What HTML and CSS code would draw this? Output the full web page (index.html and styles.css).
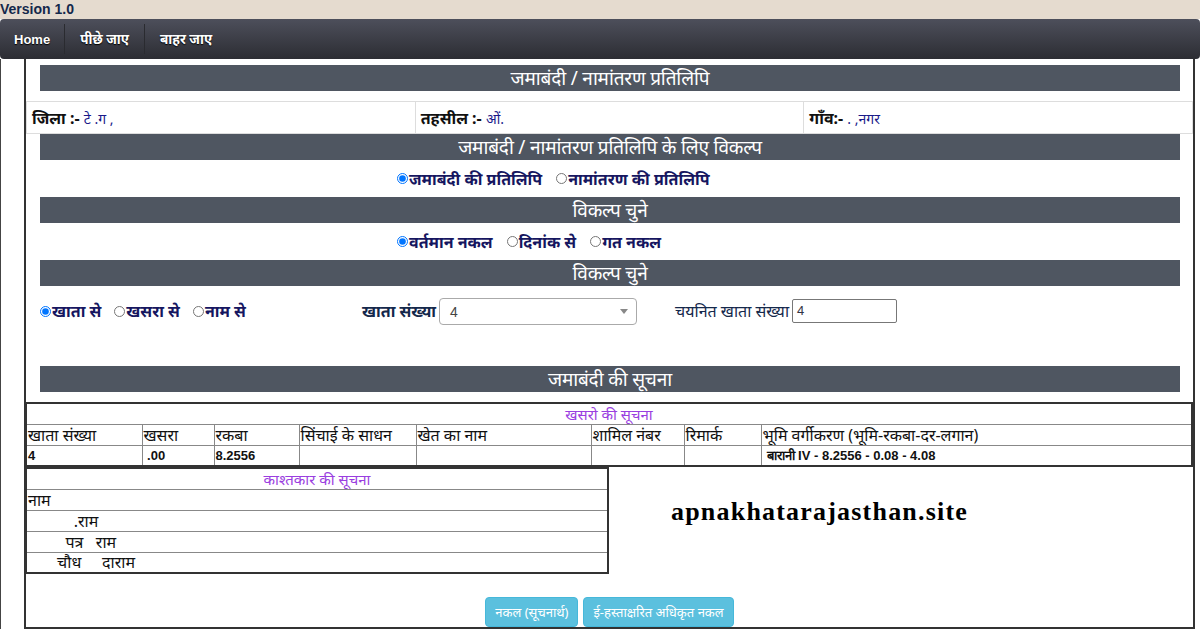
FILE: index.html
```html
<!DOCTYPE html>
<html lang="hi">
<head>
<meta charset="utf-8">
<title>जमाबंदी / नामांतरण प्रतिलिपि</title>
<link rel="stylesheet" href="styles.css">
</head>
<body>
<div class="version">Version 1.0</div>
<nav class="nav">
  <a class="nav-item nav-first" href="#">Home</a>
  <span class="nav-sep"></span>
  <a class="nav-item" href="#">पीछे जाए</a>
  <span class="nav-sep"></span>
  <a class="nav-item" href="#">बाहर जाए</a>
</nav>
<div class="frame">
  <div class="panel">
    <div class="bar">जमाबंदी / नामांतरण प्रतिलिपि</div>
    <table class="info">
      <tr>
        <td><b>जिला :-</b> <span class="val">टे .ग ,</span></td>
        <td><b>तहसील :-</b> <span class="val">ओं.</span></td>
        <td><b>गाँव:-</b> <span class="val">. ,नगर</span></td>
      </tr>
    </table>
    <div class="bar">जमाबंदी / नामांतरण प्रतिलिपि के लिए विकल्प</div>
    <div class="radio-row">
      <label class="opt"><input type="radio" name="t1" checked>जमाबंदी की प्रतिलिपि</label>
      <label class="opt"><input type="radio" name="t1">नामांतरण की प्रतिलिपि</label>
    </div>
    <div class="bar">विकल्प चुने</div>
    <div class="radio-row">
      <label class="opt"><input type="radio" name="t2" checked>वर्तमान नकल</label>
      <label class="opt"><input type="radio" name="t2">दिनांक से</label>
      <label class="opt"><input type="radio" name="t2">गत नकल</label>
    </div>
    <div class="bar">विकल्प चुने</div>
    <div class="search-row">
      <div class="search-opts">
        <label class="opt"><input type="radio" name="t3" checked>खाता से</label>
        <label class="opt"><input type="radio" name="t3">खसरा से</label>
        <label class="opt"><input type="radio" name="t3">नाम से</label>
      </div>
      <span class="field-label">खाता संख्या</span>
      <div class="select"><span>4</span><span class="caret"></span></div>
      <span class="field-label2">चयनित खाता संख्या</span>
      <div class="input">4</div>
    </div>
    <div class="bar">जमाबंदी की सूचना</div>
    <table class="grid khasra">
      <colgroup>
        <col style="width:116px"><col style="width:72px"><col style="width:85px"><col style="width:117px">
        <col style="width:175px"><col style="width:93px"><col style="width:77px"><col>
      </colgroup>
      <tr><td class="cap" colspan="8">खसरो की सूचना</td></tr>
      <tr class="head">
        <td>खाता संख्या</td><td>खसरा</td><td>रकबा</td><td>सिंचाई के साधन</td>
        <td>खेत का नाम</td><td>शामिल नंबर</td><td>रिमार्क</td><td>भूमि वर्गीकरण (भूमि-रकबा-दर-लगान)</td>
      </tr>
      <tr class="data">
        <td>4</td><td>&nbsp;.00</td><td>8.2556</td><td></td><td></td><td></td><td></td><td class="land">बारानी IV - 8.2556 - 0.08 - 4.08</td>
      </tr>
    </table>
    <div class="lower">
      <table class="grid kasht">
        <tr><td class="cap">काश्तकार की सूचना</td></tr>
        <tr class="head"><td>नाम</td></tr>
        <tr class="head"><td>&nbsp;&nbsp;&nbsp;&nbsp;&nbsp;&nbsp;&nbsp;&nbsp;&nbsp;&nbsp;&nbsp;.राम</td></tr>
        <tr class="head"><td>&nbsp;&nbsp;&nbsp;&nbsp;&nbsp;&nbsp;&nbsp;&nbsp;&nbsp;पत्र&nbsp;&nbsp;&nbsp;राम</td></tr>
        <tr class="head"><td>&nbsp;&nbsp;&nbsp;&nbsp;&nbsp;&nbsp;&nbsp;चौध&nbsp;&nbsp;&nbsp;&nbsp;&nbsp;दाराम</td></tr>
      </table>
      <div class="brand">apnakhatarajasthan.site</div>
    </div>
    <div class="actions">
      <button class="btn" type="button">नकल (सूचनार्थ)</button>
      <button class="btn" type="button">ई-हस्ताक्षरित अधिकृत नकल</button>
    </div>
  </div>
</div>
</body>
</html>
```
FILE: styles.css
```css
* { box-sizing: border-box; }
body {
  margin: 0;
  background: #fff;
  font-family: "Noto Sans", "Liberation Sans", sans-serif;
  color: #111;
}
.version {
  height: 19px;
  background: #e5dbcf;
  font: bold 14px/19px "Liberation Sans", sans-serif;
  color: #14284b;
}
.nav {
  height: 40px;
  background: linear-gradient(#4d4f5b, #2c2d33);
  border-radius: 4px;
  display: flex;
  align-items: center;
}
.nav-item {
  color: #fff;
  text-decoration: none;
  font-weight: bold;
  font-size: 13.5px;
  padding: 0 15px;
  text-shadow: 0 1px 1px #000;
}
.nav-first { padding-left: 14px; padding-right: 14px; font-size: 13px; font-family: "Liberation Sans", sans-serif; }
.nav-sep {
  width: 1px;
  height: 30px;
  background: #5a5c66;
  border-right: 1px solid #2a2b30;
}
.frame {
  border-left: 1px solid #444;
  padding-left: 23px;
}
.panel {
  width: 1171px;
  border-left: 2px solid #333;
  border-right: 2px solid #333;
  border-bottom: 2px solid #333;
  padding-top: 6px;
}
.bar {
  height: 26px;
  margin: 0 13px 0 14px;
  background: #4f5661;
  color: #fff;
  text-align: center;
  font-size: 19px;
  line-height: 26px;
  letter-spacing: -0.2px;
}
.info {
  width: 100%;
  margin-top: 10px;
  border-collapse: collapse;
  border: 1px solid #ddd;
  table-layout: fixed;
}
.info td {
  height: 32px;
  border: 1px solid #ddd;
  padding: 0 5px;
  font-size: 16px;
}
.info b { font-weight: bold; }
.val { color: #1a1a8a; font-size: 14px; }
.radio-row {
  height: 37px;
  display: flex;
  align-items: center;
  gap: 14px;
  padding-left: 371px;
}
.opt {
  display: flex;
  align-items: center;
  font-weight: bold;
  font-size: 16px;
  color: #161660;
}
.opt input {
  width: 11px;
  height: 11px;
  margin: 0 1px 0 0;
}
.search-row {
  height: 80px;
  display: flex;
  align-items: flex-start;
  padding: 12px 0 0 14px;
}
.search-opts {
  width: 322px;
  display: flex;
  gap: 13px;
  padding-top: 2px;
}
.field-label {
  font-weight: bold;
  font-size: 16px;
  color: #14284b;
  margin-top: 2px;
  margin-right: 3px;
}
.select {
  width: 198px;
  height: 27px;
  border: 1px solid #aaa;
  border-radius: 4px;
  display: flex;
  align-items: center;
  justify-content: space-between;
  padding: 0 8px 0 10px;
  font: 14px "Liberation Sans", sans-serif;
  color: #444;
}
.caret {
  width: 0;
  height: 0;
  border-left: 4px solid transparent;
  border-right: 4px solid transparent;
  border-top: 5px solid #888;
}
.field-label2 {
  margin-left: 38px;
  margin-top: 2px;
  margin-right: 3px;
  font-size: 16px;
  color: #14284b;
}
.input {
  width: 105px;
  height: 24px;
  margin-top: 1px;
  border: 1px solid #777;
  border-radius: 2px;
  padding: 0 4px;
  font: 13px/22px "Liberation Sans", sans-serif;
  color: #334;
}
.grid {
  border-collapse: collapse;
  border: 2px solid #333;
  table-layout: fixed;
}
.grid td {
  height: 21px;
  border: 1px solid #888;
  padding: 0 1px;
  font-size: 16px;
  line-height: 18px;
  white-space: nowrap;
  overflow: hidden;
}
.khasra { width: calc(100% + 1px); margin: 10px 0 0 -1px; }
.grid .cap {
  text-align: center;
  color: #9a3ee0;
  font-style: italic;
  font-size: 15px;
}
.grid .data td {
  font: bold 13px "Liberation Sans", sans-serif;
}
.grid .data .land { padding-left: 5px; }
.lower {
  display: flex;
  align-items: flex-start;
}
.kasht { width: 584px; margin-left: -1px; }
.brand {
  margin-left: 62px;
  margin-top: 30px;
  font: bold 26px/30px "Liberation Serif", serif;
  letter-spacing: 1.2px;
  color: #000;
}
.actions {
  display: flex;
  justify-content: center;
  gap: 5px;
  padding-top: 23px;
}
.btn {
  height: 30px;
  padding: 0 9px;
  background: #5bc0de;
  border: 1px solid #46b8da;
  border-radius: 4px;
  color: #fff;
  font-family: "Noto Sans", sans-serif;
  font-size: 13px;
}
```
